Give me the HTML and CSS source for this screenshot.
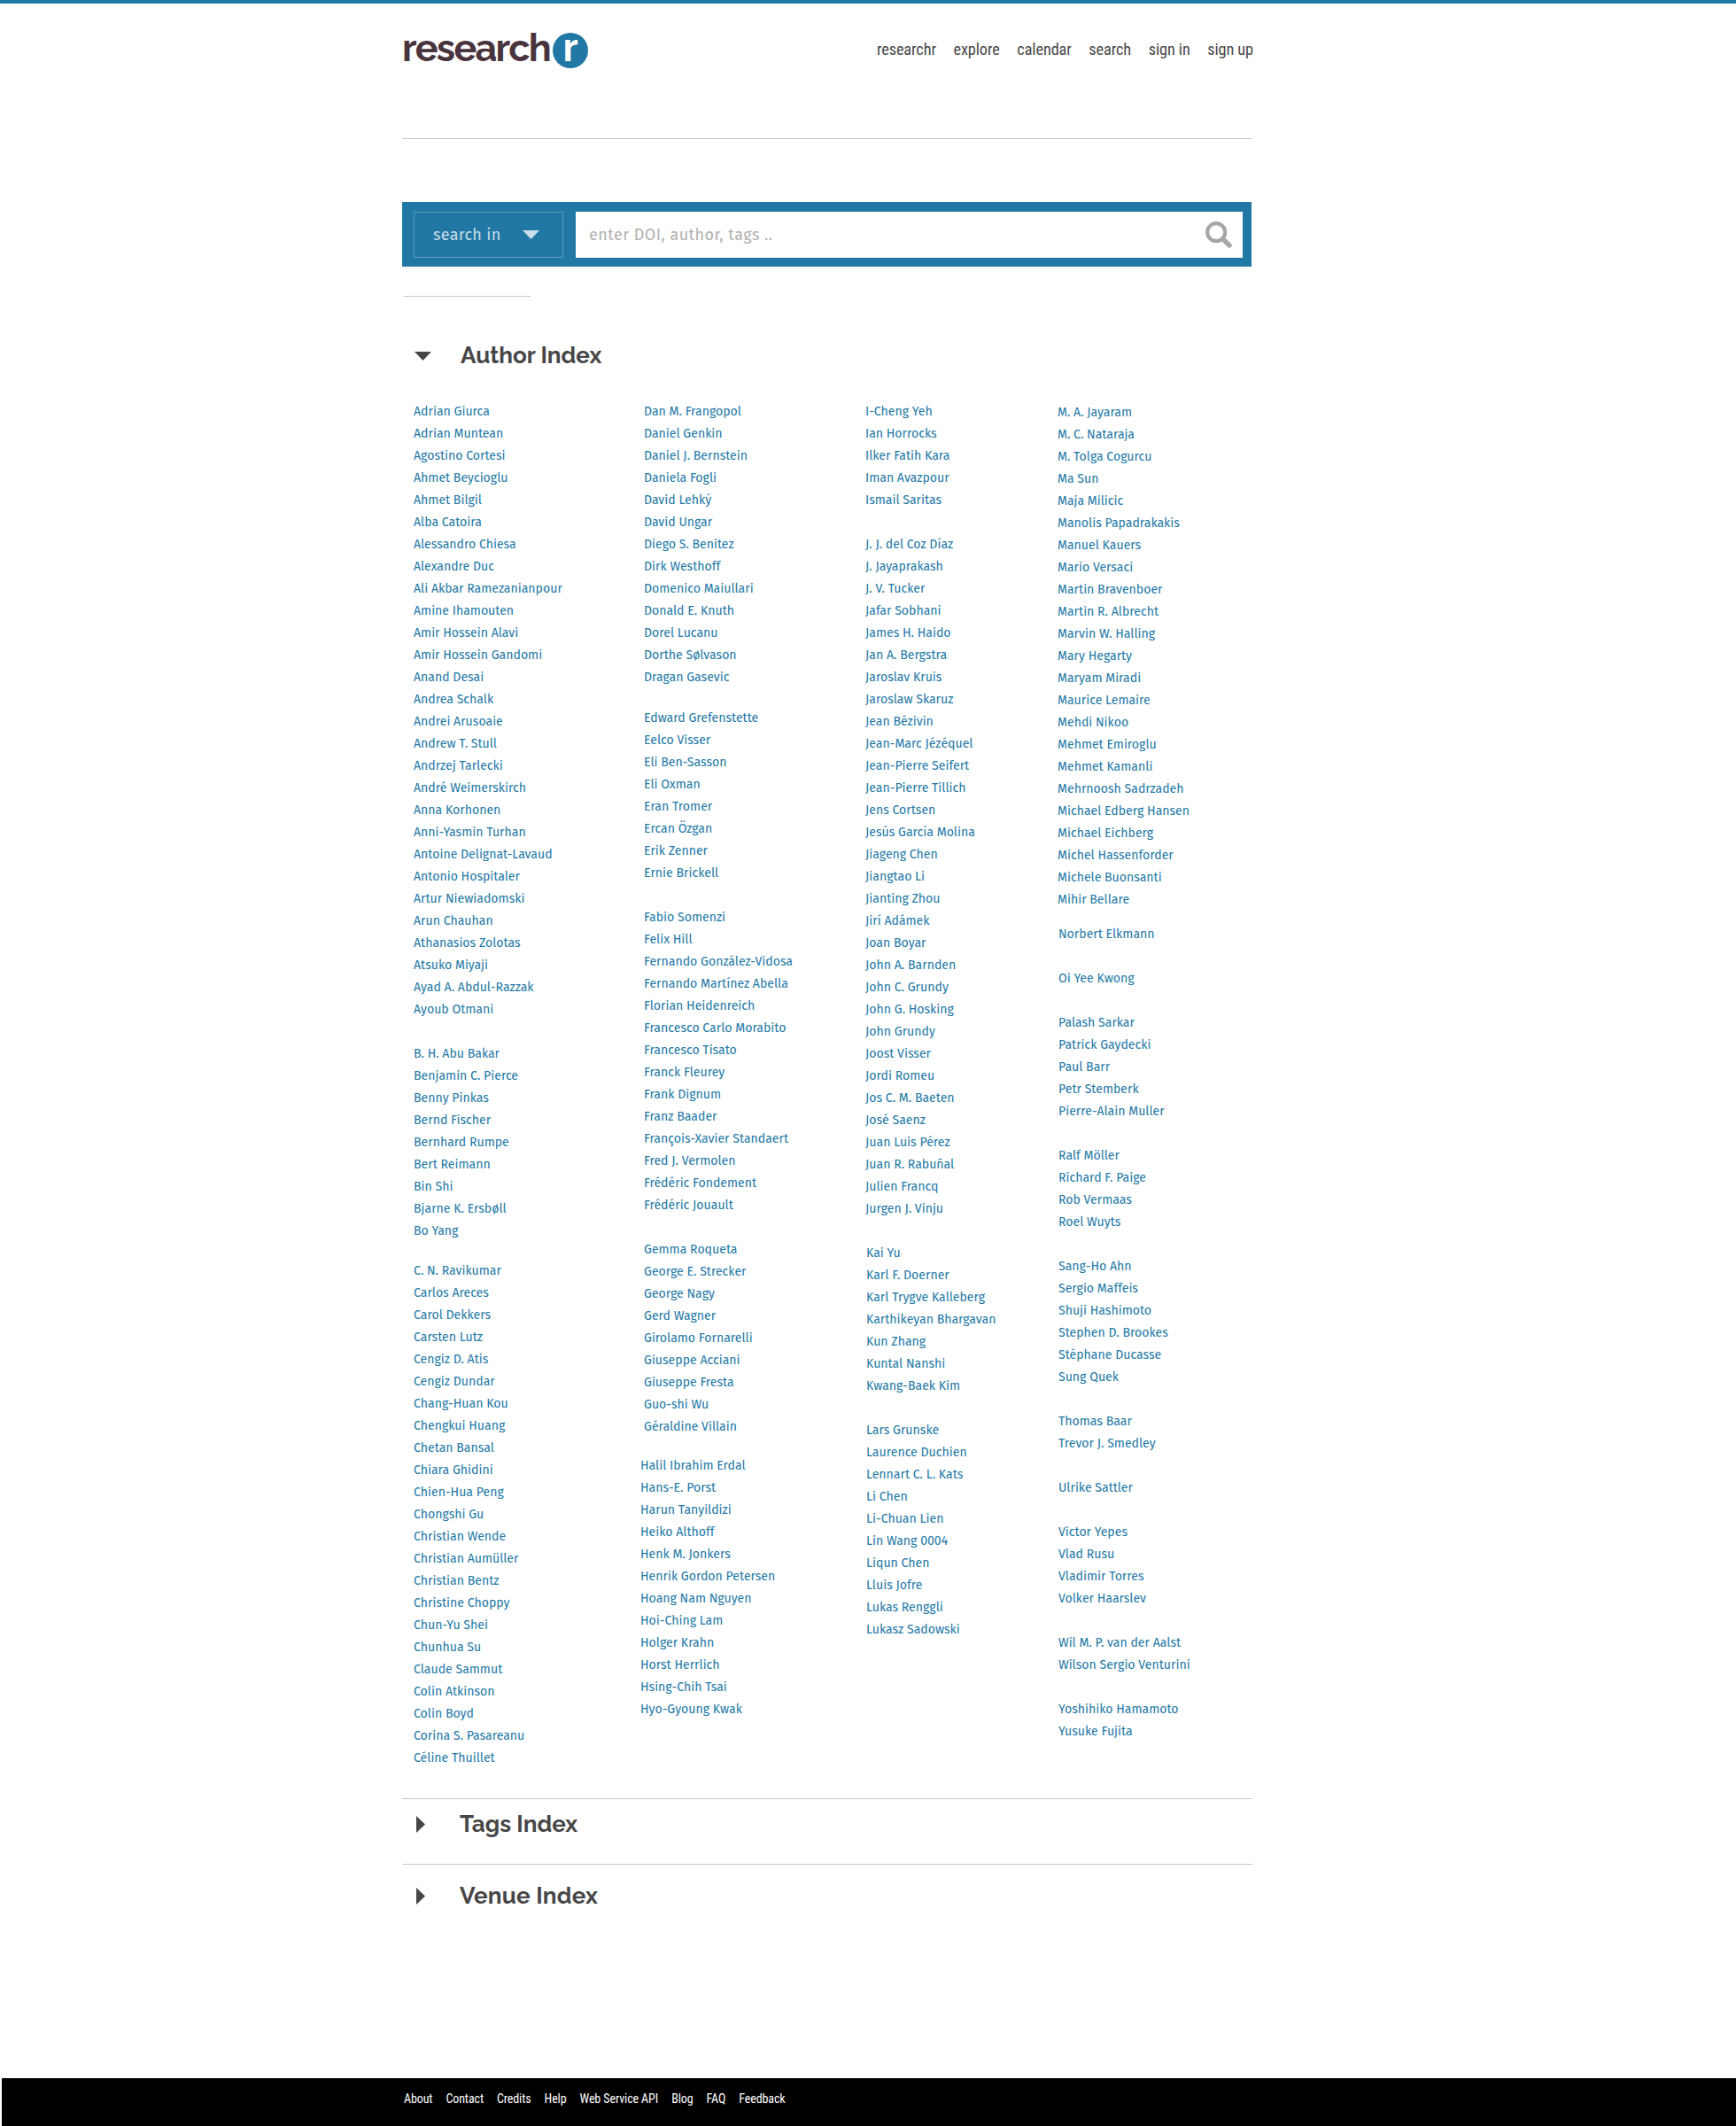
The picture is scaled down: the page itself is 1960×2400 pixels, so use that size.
FILE: index.html
```html
<!DOCTYPE html>
<html lang="en">
<head>
<meta charset="utf-8">
<title>researchr</title>
<link rel="stylesheet" href="styles.css">
</head>
<body>
<div class="page">
<header class="header">
<a class="logo"><span class="logo-word">research</span><span class="logo-badge">r</span></a>
<nav class="nav"><a>researchr</a><a>explore</a><a>calendar</a><a>search</a><a>sign in</a><a>sign up</a></nav>
</header>
<form class="search">
<div class="search-in"><span>search in</span><svg class="caret-down" viewBox="0 0 19 10"><path d="M0 0h19L9.5 10z"/></svg></div>
<div class="search-field"><span>enter DOI, author, tags ..</span><svg class="lens" viewBox="0 0 30 30"><circle cx="12.2" cy="12.2" r="10" fill="none" stroke="#a6a6a6" stroke-width="4.2"/><path d="M19.800 19.800L27 27" stroke="#a6a6a6" stroke-width="5.4" stroke-linecap="round"/></svg></div>
</form>
<div class="short-rule"></div>
<main>
<section class="author">
<h2 class="title"><svg class="caret-down" viewBox="0 0 19 10"><path d="M0 0h19L9.5 10z"/></svg><span>Author Index</span></h2>
<div class="columns">
<div class="column">
<ul><li>Adrian Giurca</li><li>Adrian Muntean</li><li>Agostino Cortesi</li><li>Ahmet Beycioglu</li><li>Ahmet Bilgil</li><li>Alba Catoira</li><li>Alessandro Chiesa</li><li>Alexandre Duc</li><li>Ali Akbar Ramezanianpour</li><li>Amine Ihamouten</li><li>Amir Hossein Alavi</li><li>Amir Hossein Gandomi</li><li>Anand Desai</li><li>Andrea Schalk</li><li>Andrei Arusoaie</li><li>Andrew T. Stull</li><li>Andrzej Tarlecki</li><li>André Weimerskirch</li><li>Anna Korhonen</li><li>Anni-Yasmin Turhan</li><li>Antoine Delignat-Lavaud</li><li>Antonio Hospitaler</li><li>Artur Niewiadomski</li><li>Arun Chauhan</li><li>Athanasios Zolotas</li><li>Atsuko Miyaji</li><li>Ayad A. Abdul-Razzak</li><li>Ayoub Otmani</li></ul>
<ul><li>B. H. Abu Bakar</li><li>Benjamin C. Pierce</li><li>Benny Pinkas</li><li>Bernd Fischer</li><li>Bernhard Rumpe</li><li>Bert Reimann</li><li>Bin Shi</li><li>Bjarne K. Ersbøll</li><li>Bo Yang</li></ul>
<ul class="group-c"><li>C. N. Ravikumar</li><li>Carlos Areces</li><li>Carol Dekkers</li><li>Carsten Lutz</li><li>Cengiz D. Atis</li><li>Cengiz Dundar</li><li>Chang-Huan Kou</li><li>Chengkui Huang</li><li>Chetan Bansal</li><li>Chiara Ghidini</li><li>Chien-Hua Peng</li><li>Chongshi Gu</li><li>Christian Wende</li><li>Christian Aumüller</li><li>Christian Bentz</li><li>Christine Choppy</li><li>Chun-Yu Shei</li><li>Chunhua Su</li><li>Claude Sammut</li><li>Colin Atkinson</li><li>Colin Boyd</li><li>Corina S. Pasareanu</li><li>Céline Thuillet</li></ul>
</div>
<div class="column">
<ul><li>Dan M. Frangopol</li><li>Daniel Genkin</li><li>Daniel J. Bernstein</li><li>Daniela Fogli</li><li>David Lehký</li><li>David Ungar</li><li>Diego S. Benitez</li><li>Dirk Westhoff</li><li>Domenico Maiullari</li><li>Donald E. Knuth</li><li>Dorel Lucanu</li><li>Dorthe Sølvason</li><li>Dragan Gasevic</li></ul>
<ul class="group-e"><li>Edward Grefenstette</li><li>Eelco Visser</li><li>Eli Ben-Sasson</li><li>Eli Oxman</li><li>Eran Tromer</li><li>Ercan Özgan</li><li>Erik Zenner</li><li>Ernie Brickell</li></ul>
<ul><li>Fabio Somenzi</li><li>Felix Hill</li><li>Fernando González-Vidosa</li><li>Fernando Martínez Abella</li><li>Florian Heidenreich</li><li>Francesco Carlo Morabito</li><li>Francesco Tisato</li><li>Franck Fleurey</li><li>Frank Dignum</li><li>Franz Baader</li><li>François-Xavier Standaert</li><li>Fred J. Vermolen</li><li>Frédéric Fondement</li><li>Frédéric Jouault</li></ul>
<ul><li>Gemma Roqueta</li><li>George E. Strecker</li><li>George Nagy</li><li>Gerd Wagner</li><li>Girolamo Fornarelli</li><li>Giuseppe Acciani</li><li>Giuseppe Fresta</li><li>Guo-shi Wu</li><li>Géraldine Villain</li></ul>
<ul class="group-h"><li>Halil Ibrahim Erdal</li><li>Hans-E. Porst</li><li>Harun Tanyildizi</li><li>Heiko Althoff</li><li>Henk M. Jonkers</li><li>Henrik Gordon Petersen</li><li>Hoang Nam Nguyen</li><li>Hoi-Ching Lam</li><li>Holger Krahn</li><li>Horst Herrlich</li><li>Hsing-Chih Tsai</li><li>Hyo-Gyoung Kwak</li></ul>
</div>
<div class="column">
<ul><li>I-Cheng Yeh</li><li>Ian Horrocks</li><li>Ilker Fatih Kara</li><li>Iman Avazpour</li><li>Ismail Saritas</li></ul>
<ul><li>J. J. del Coz Díaz</li><li>J. Jayaprakash</li><li>J. V. Tucker</li><li>Jafar Sobhani</li><li>James H. Haido</li><li>Jan A. Bergstra</li><li>Jaroslav Kruis</li><li>Jaroslaw Skaruz</li><li>Jean Bézivin</li><li>Jean-Marc Jézéquel</li><li>Jean-Pierre Seifert</li><li>Jean-Pierre Tillich</li><li>Jens Cortsen</li><li>Jesús García Molina</li><li>Jiageng Chen</li><li>Jiangtao Li</li><li>Jianting Zhou</li><li>Jirí Adámek</li><li>Joan Boyar</li><li>John A. Barnden</li><li>John C. Grundy</li><li>John G. Hosking</li><li>John Grundy</li><li>Joost Visser</li><li>Jordi Romeu</li><li>Jos C. M. Baeten</li><li>José Saenz</li><li>Juan Luis Pérez</li><li>Juan R. Rabuñal</li><li>Julien Francq</li><li>Jurgen J. Vinju</li></ul>
<ul class="inset"><li>Kai Yu</li><li>Karl F. Doerner</li><li>Karl Trygve Kalleberg</li><li>Karthikeyan Bhargavan</li><li>Kun Zhang</li><li>Kuntal Nanshi</li><li>Kwang-Baek Kim</li></ul>
<ul class="inset"><li>Lars Grunske</li><li>Laurence Duchien</li><li>Lennart C. L. Kats</li><li>Li Chen</li><li>Li-Chuan Lien</li><li>Lin Wang 0004</li><li>Liqun Chen</li><li>Lluis Jofre</li><li>Lukas Renggli</li><li>Lukasz Sadowski</li></ul>
</div>
<div class="column column-m">
<ul><li>M. A. Jayaram</li><li>M. C. Nataraja</li><li>M. Tolga Cogurcu</li><li>Ma Sun</li><li>Maja Milicic</li><li>Manolis Papadrakakis</li><li>Manuel Kauers</li><li>Mario Versaci</li><li>Martin Bravenboer</li><li>Martin R. Albrecht</li><li>Marvin W. Halling</li><li>Mary Hegarty</li><li>Maryam Miradi</li><li>Maurice Lemaire</li><li>Mehdi Nikoo</li><li>Mehmet Emiroglu</li><li>Mehmet Kamanli</li><li>Mehrnoosh Sadrzadeh</li><li>Michael Edberg Hansen</li><li>Michael Eichberg</li><li>Michel Hassenforder</li><li>Michele Buonsanti</li><li>Mihir Bellare</li></ul>
<ul class="group-n inset"><li>Norbert Elkmann</li></ul>
<ul class="inset"><li>Oi Yee Kwong</li></ul>
<ul class="inset"><li>Palash Sarkar</li><li>Patrick Gaydecki</li><li>Paul Barr</li><li>Petr Stemberk</li><li>Pierre-Alain Muller</li></ul>
<ul class="inset"><li>Ralf Möller</li><li>Richard F. Paige</li><li>Rob Vermaas</li><li>Roel Wuyts</li></ul>
<ul class="inset"><li>Sang-Ho Ahn</li><li>Sergio Maffeis</li><li>Shuji Hashimoto</li><li>Stephen D. Brookes</li><li>Stéphane Ducasse</li><li>Sung Quek</li></ul>
<ul class="inset"><li>Thomas Baar</li><li>Trevor J. Smedley</li></ul>
<ul class="inset"><li>Ulrike Sattler</li></ul>
<ul class="inset"><li>Victor Yepes</li><li>Vlad Rusu</li><li>Vladimir Torres</li><li>Volker Haarslev</li></ul>
<ul class="inset"><li>Wil M. P. van der Aalst</li><li>Wilson Sergio Venturini</li></ul>
<ul class="inset"><li>Yoshihiko Hamamoto</li><li>Yusuke Fujita</li></ul>
</div>
</div>
</section>
<section class="closed tags"><h2 class="title"><svg class="caret-right" viewBox="0 0 10 19"><path d="M0 0v19l10-9.500z"/></svg><span>Tags Index</span></h2></section>
<section class="closed venue"><h2 class="title"><svg class="caret-right" viewBox="0 0 10 19"><path d="M0 0v19l10-9.500z"/></svg><span>Venue Index</span></h2></section>
</main>
</div>
<footer class="footer"><a>About</a><a>Contact</a><a>Credits</a><a>Help</a><a>Web Service API</a><a>Blog</a><a>FAQ</a><a>Feedback</a></footer>
</body>
</html>
```
FILE: styles.css
```css
* { box-sizing: border-box; }
body {
  margin: 0;
  height: 2400px;
  display: flex;
  flex-direction: column;
  background: #fff;
  border-top: 4px solid #2278a5;
  font-family: "Fira Sans", "Open Sans", sans-serif;
  overflow: hidden;
}
svg { display: block; flex: none; }
.page { width: 960px; margin-left: 454px; flex: 1; }
.header {
  height: 153px;
  border-bottom: 1px solid #c8c8c8;
  display: flex;
  justify-content: space-between;
  align-items: flex-start;
}
.logo { display: flex; font-family: Raleway, Lato, sans-serif; font-weight: 700; color: #49343d; padding-top: 28px; }
.logo-word { width: 170px; font-size: 43px; line-height: 45px; letter-spacing: -1.65px; white-space: nowrap; }
.logo-badge {
  width: 40px;
  height: 40px;
  margin-top: 5px;
  border-radius: 50%;
  background: #2278a5;
  color: #fff;
  font-size: 44px;
  line-height: 33px;
  text-align: center;
}
.nav {
  display: flex;
  gap: 19.6px;
  padding-top: 38px;
  margin-right: -1px;
  font: 18.3px/27px "Roboto Condensed", Roboto, sans-serif;
  font-stretch: 75%;
  letter-spacing: -0.1px;
  color: #484848;
}
.search {
  width: 959px;
  height: 73px;
  margin-top: 71px;
  padding: 11px 10px 10px 13px;
  display: flex;
  gap: 14px;
  background: #2278a5;
  font-size: 18px;
  line-height: 50px;
}
.search-in {
  width: 169px;
  height: 52px;
  border: 1px solid #5b9abd;
  padding: 0 26px 0 21px;
  display: flex;
  justify-content: space-between;
  align-items: center;
  letter-spacing: 0.3px;
  color: #c8dde8;
  fill: #c8dfe9;
}
.search-field {
  flex: 1;
  padding: 0 12px 0 15px;
  background: #fff;
  display: flex;
  justify-content: space-between;
  align-items: center;
  letter-spacing: 0.44px;
  color: #b0b0b0;
}
.lens { width: 30px; height: 30px; }
.caret-down { width: 19px; height: 10px; }
.caret-right { width: 10px; height: 19px; }
.short-rule { width: 143px; height: 1px; margin: 33px 0 0 2px; background: #c8c8c8; }
.title {
  margin: 0;
  display: flex;
  align-items: center;
  font: 700 26px/36px Raleway, Lato, sans-serif;
  color: #464646;
  fill: #464646;
}
.author .title { padding: 0 0 0 14px; gap: 33px; }
.author .caret-down { margin-top: 2px; }
.author { height: 1695px; padding-top: 48px; }
.columns {
  display: grid;
  grid-template-columns: 260px 250px 217px auto;
  padding: 33px 0 0 13px;
  font-size: 14.08px;
  line-height: 25px;
  color: #2278a5;
}
.column-m { padding-top: 1px; }
ul { margin: 0; padding: 0; list-style: none; }
li { white-space: nowrap; }
ul + ul { margin-top: 25px; }
ul + .group-c { margin-top: 20px; }
ul + .group-e { margin-top: 21px; }
ul + .group-h { margin-top: 19px; margin-left: -4px; }
ul + .group-n { margin-top: 14px; }
.inset { margin-left: 1px; }
.closed { border-top: 1px solid #c8c8c8; }
.closed .title { padding-left: 16px; gap: 39px; }
.tags { height: 74px; padding-top: 10px; }
.venue { padding-top: 17px; }
.venue .title { letter-spacing: 0.2px; }
.footer {
  height: 54px;
  margin-left: 2px;
  padding: 11px 0 0 454px;
  display: flex;
  gap: 15px;
  background: #000;
  color: #fff;
  font: 14px/24px "Roboto Condensed", Roboto, sans-serif;
  font-stretch: 75%;
  letter-spacing: -0.1px;
}
```
